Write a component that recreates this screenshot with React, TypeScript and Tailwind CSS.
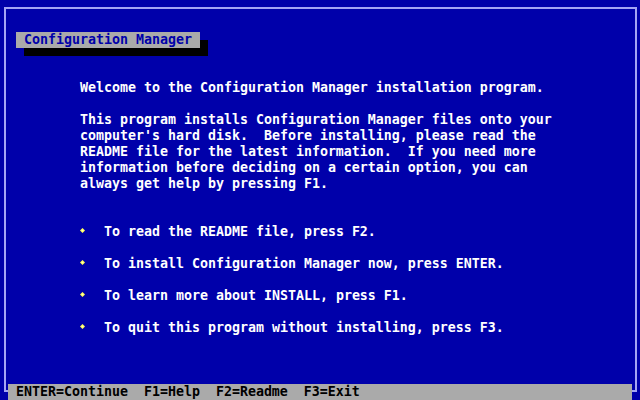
const paragraph = [
  "This program installs Configuration Manager files onto your",
  "computer's hard disk.  Before installing, please read the",
  "README file for the latest information.  If you need more",
  "information before deciding on a certain option, you can",
  "always get help by pressing F1.",
];

const options = [
  "To read the README file, press F2.",
  "To install Configuration Manager now, press ENTER.",
  "To learn more about INSTALL, press F1.",
  "To quit this program without installing, press F3.",
];

function Diamond() {
  return (
    <svg width="8" height="16" viewBox="0 0 8 16" className="block shrink-0">
      <polygon points="0,6.5 2.5,4 5,6.5 2.5,9" fill="#ffff55" />
      <polygon points="1.5,6.5 2.5,5.5 3.5,6.5 2.5,7.5" fill="#ffffc0" />
    </svg>
  );
}

export default function App() {
  return (
    <div
      className="w-[640px] h-[400px] overflow-hidden bg-[#0000aa] text-white font-bold text-[13.29px] leading-[16px] flex flex-col"
      style={{ fontFamily: '"DejaVu Sans Mono", "Liberation Mono", monospace' }}
    >
      {/* Frame */}
      <div className="ml-[4px] mt-[7px] w-[633px] h-[385px] shrink-0 border-2 border-[#a4a4f4] flex flex-col">
        {/* Title box */}
        <div className="ml-[10px] mt-[23px] w-[184px] h-[16px] bg-[#aaaaaa] text-[#0000aa] pl-[8px] whitespace-pre shadow-[8px_8px_0_#000]">
          Configuration Manager
        </div>

        {/* Body */}
        <div className="ml-[74px] mt-[32px] flex flex-col whitespace-pre">
          <div className="h-[16px]">Welcome to the Configuration Manager installation program.</div>
          <div className="mt-[16px] flex flex-col">
            {paragraph.map((line) => (
              <div key={line} className="h-[16px]">
                {line}
              </div>
            ))}
          </div>

          <div className="mt-[32px] flex flex-col gap-4">
            {options.map((opt) => (
              <div key={opt} className="h-[16px] flex">
                <div className="w-[24px] shrink-0">
                  <Diamond />
                </div>
                <span>{opt}</span>
              </div>
            ))}
          </div>
        </div>
      </div>

      {/* Status bar */}
      <div className="relative -mt-[8px] ml-[8px] w-[624px] h-[16px] shrink-0 bg-[#aaaaaa] text-black pl-[8px] whitespace-pre">
        ENTER=Continue  F1=Help  F2=Readme  F3=Exit
      </div>
    </div>
  );
}
